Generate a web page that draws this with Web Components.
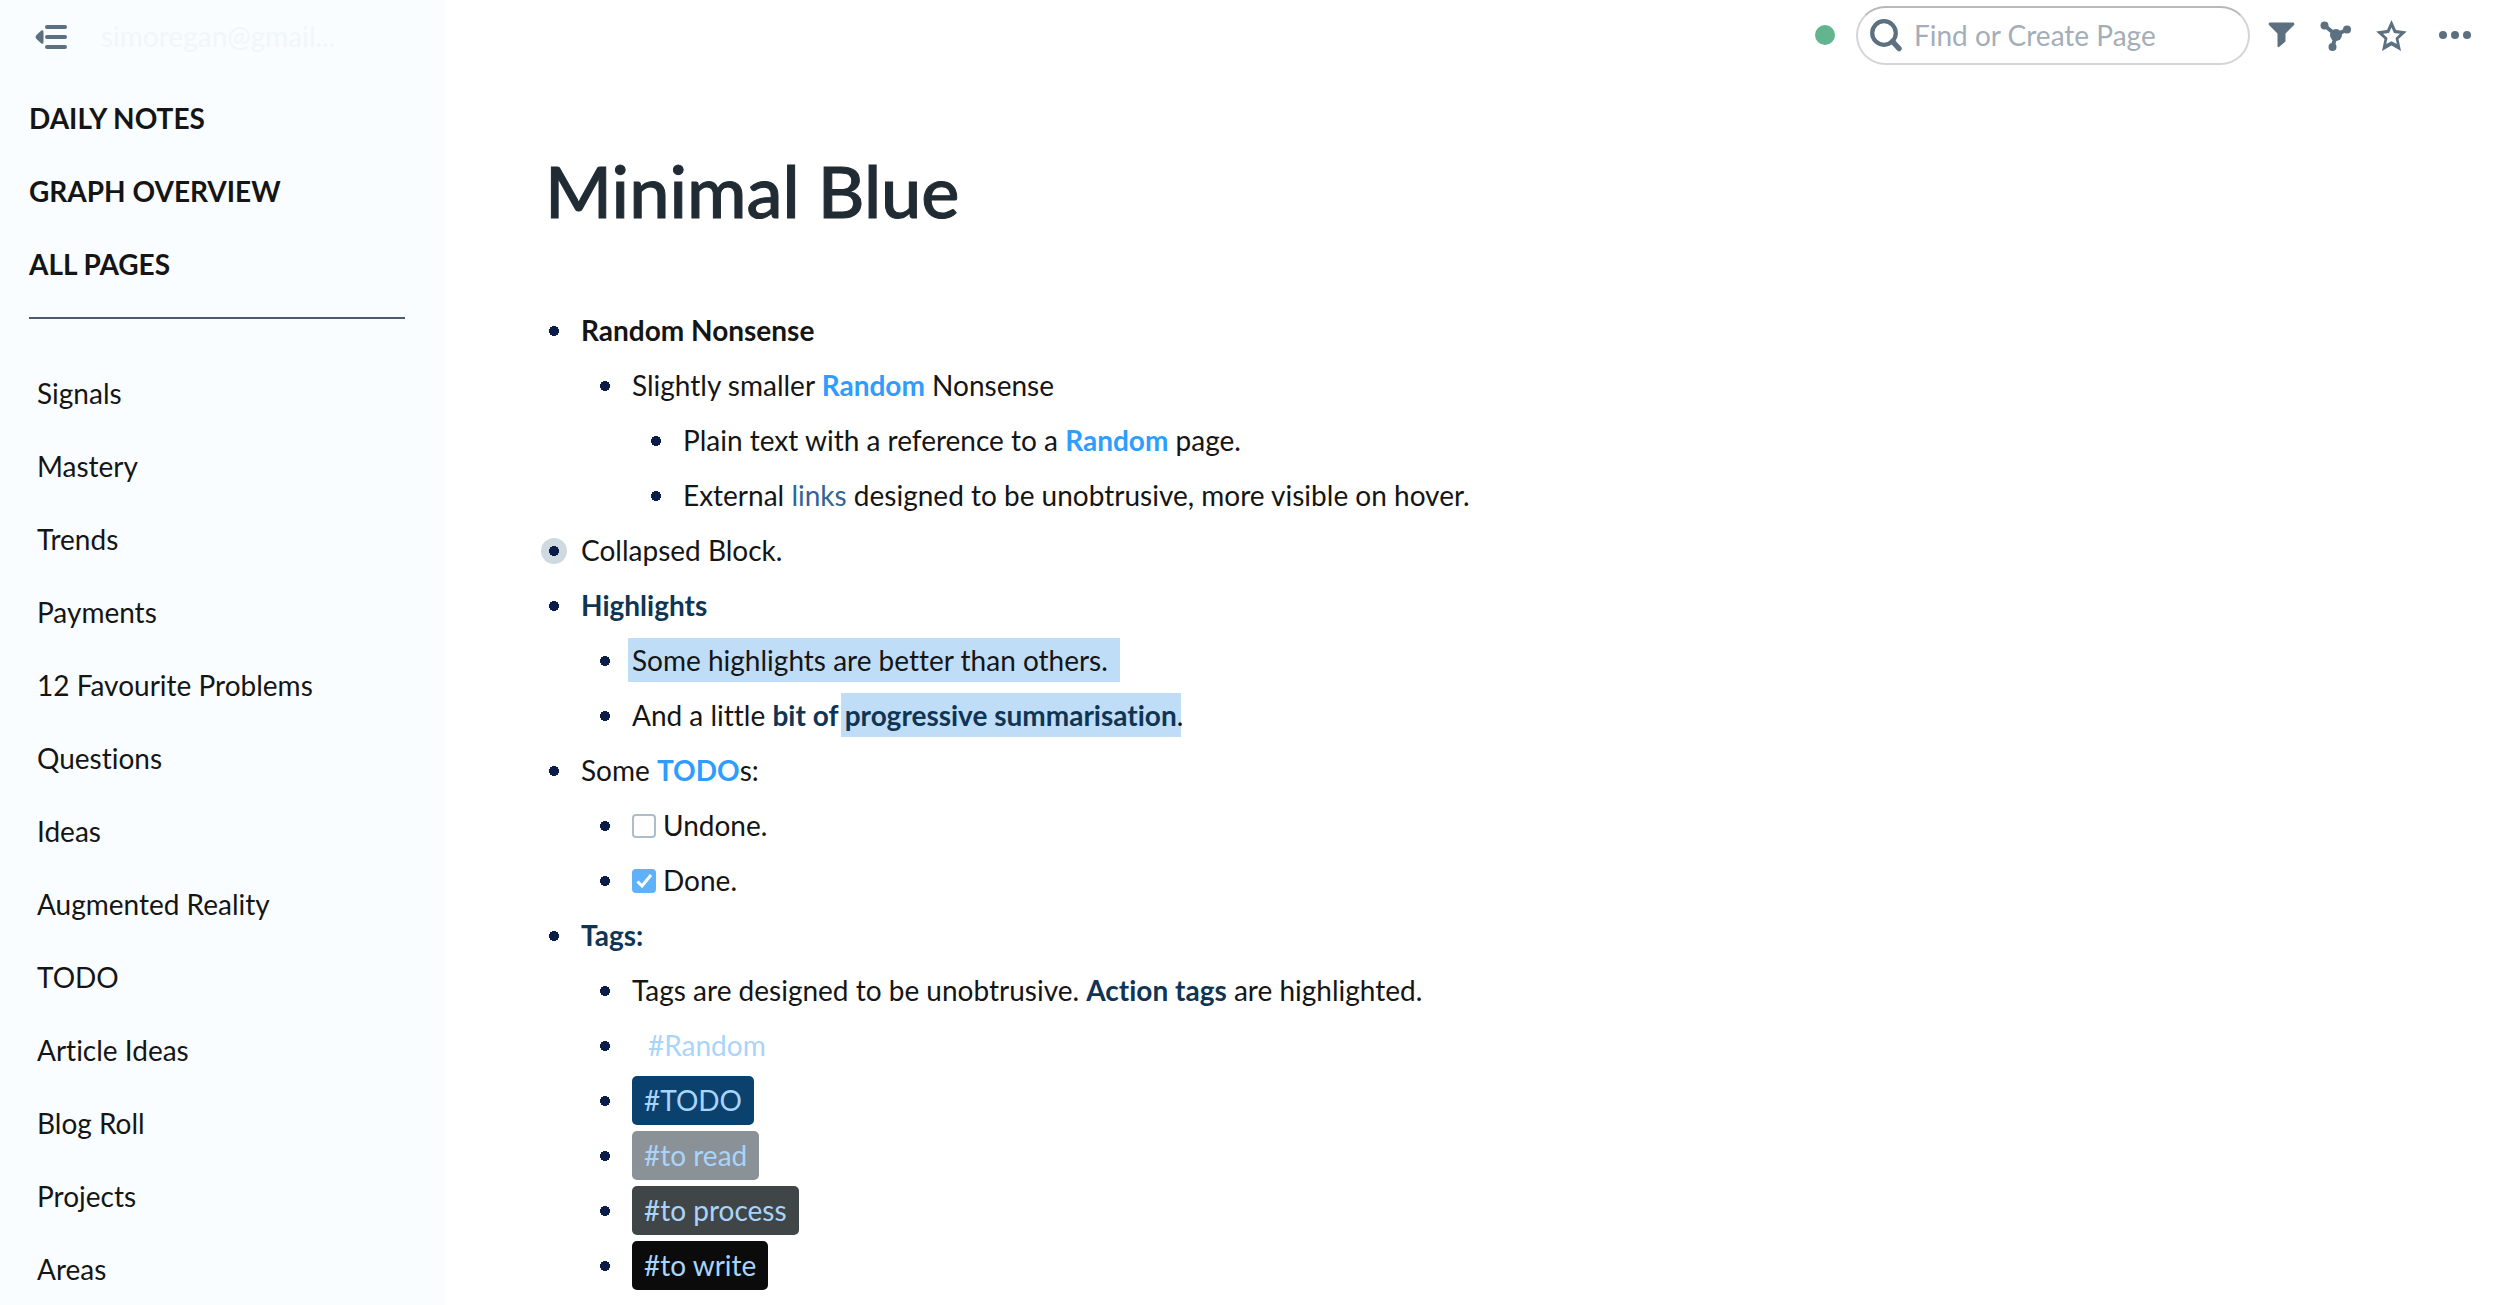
<!DOCTYPE html>
<html lang="en">
<head>
<meta charset="utf-8">
<title>Minimal Blue</title>
<style>
    html, body { margin: 0; height: 100%; }
    body {
        font-family: Lato, "Open Sans", sans-serif;
        font-size: 28px;
        font-variant-ligatures: none;
        line-height: 55px;
        color: #151515;
        background: #fff;
        overflow: hidden;
        --icon-color: #5c7080;
        --navy: #0f3554;
        --link: #2f9dff;
    }
    a { color: inherit; text-decoration: none; }
    b { color: var(--navy); }
    b.plain { color: inherit; }
    a.page { color: var(--link); font-weight: 700; }
    a.external { color: #326494; }
    mark { color: inherit; background: #c0ddf8; padding: 5px 4px; margin: 0 -4px; }
    mark.line { padding-right: 12px; }
</style>
</head>
<body>
<notes-app>
    <side-bar slot="sidebar" user="simoregan@gmail...">
        <nav-link slot="main">DAILY NOTES</nav-link>
        <nav-link slot="main">GRAPH OVERVIEW</nav-link>
        <nav-link slot="main">ALL PAGES</nav-link>
        <nav-link>Signals</nav-link>
        <nav-link>Mastery</nav-link>
        <nav-link>Trends</nav-link>
        <nav-link>Payments</nav-link>
        <nav-link>12 Favourite Problems</nav-link>
        <nav-link>Questions</nav-link>
        <nav-link>Ideas</nav-link>
        <nav-link>Augmented Reality</nav-link>
        <nav-link>TODO</nav-link>
        <nav-link>Article Ideas</nav-link>
        <nav-link>Blog Roll</nav-link>
        <nav-link>Projects</nav-link>
        <nav-link>Areas</nav-link>
    </side-bar>
    <top-bar slot="topbar"></top-bar>
    <note-page heading="Minimal Blue">
        <note-block><b class="plain">Random Nonsense</b>
            <note-block slot="children">Slightly smaller <a class="page" href="#random">Random</a> Nonsense
                <note-block slot="children">Plain text with a reference to a <a class="page" href="#random">Random</a> page.</note-block>
                <note-block slot="children">External <a class="external" href="#links">links</a> designed to be unobtrusive, more visible on hover.</note-block>
            </note-block>
        </note-block>
        <note-block collapsed>Collapsed Block.</note-block>
        <note-block><b>Highlights</b>
            <note-block slot="children"><mark class="line">Some highlights are better than others.</mark></note-block>
            <note-block slot="children">And a little <b>bit of <mark>progressive summarisation</mark></b>.</note-block>
        </note-block>
        <note-block>Some <a class="page" href="#todo">TODO</a>s:
            <note-block slot="children"><todo-item>Undone.</todo-item></note-block>
            <note-block slot="children"><todo-item done>Done.</todo-item></note-block>
        </note-block>
        <note-block><b>Tags:</b>
            <note-block slot="children">Tags are designed to be unobtrusive. <b>Action tags</b> are highlighted.</note-block>
            <note-block slot="children"><page-tag>#Random</page-tag></note-block>
            <note-block slot="children"><page-tag kind="todo">#TODO</page-tag></note-block>
            <note-block slot="children"><page-tag kind="read">#to read</page-tag></note-block>
            <note-block slot="children"><page-tag kind="process">#to process</page-tag></note-block>
            <note-block slot="children"><page-tag kind="write">#to write</page-tag></note-block>
        </note-block>
    </note-page>
</notes-app>

<script>
class NotesApp extends HTMLElement {
    constructor() {
        super();
        this.attachShadow({ mode: 'open' }).innerHTML = `
            <style>
                :host { display: grid; grid-template-columns: 445px 1fr; height: 100vh; overflow: hidden; }
                .content { display: flex; flex-direction: column; min-width: 0; }
            </style>
            <slot name="sidebar"></slot>
            <div class="content">
                <slot name="topbar"></slot>
                <slot></slot>
            </div>
        `;
    }
}

class SideBar extends HTMLElement {
    constructor() {
        super();
        this.attachShadow({ mode: 'open' });
    }

    connectedCallback() {
        this.shadowRoot.innerHTML = `
            <style>
                :host { display: block; background: #f9fdff; padding: 0 40px 0 29px; overflow: hidden; }
                header { display: flex; align-items: center; gap: 34px; height: 72px; padding-left: 6px; }
                button { display: flex; border: 0; padding: 0; background: none; color: var(--icon-color); cursor: pointer; }
                .user { color: #f1f6fa; }
                .main { display: block; padding: 10px 0 16px; font-weight: 700; }
                hr { margin: 0 0 38px; border: 0; border-top: 2px solid #4b5b6e; }
                .starred { display: block; padding-left: 8px; }
            </style>
            <header>
                <button aria-label="Close sidebar">
                    <svg width="32" height="26" viewBox="0 0 32 26" fill="currentColor">
                        <path d="M1.500 12 6.300 7.600Q8.500 6.500 8.500 9v10q0 2.500-2.200 1.400L1.500 16q-1.800-2 0-4z"/>
                        <path d="M12 4h18M12 14h18M12 24h18" stroke="currentColor" stroke-width="4" stroke-linecap="round"/>
                    </svg>
                </button>
                <span class="user">${this.getAttribute('user')}</span>
            </header>
            <nav>
                <div class="main"><slot name="main"></slot></div>
                <hr>
                <div class="starred"><slot></slot></div>
            </nav>
        `;
    }
}

class NavLink extends HTMLElement {
    constructor() {
        super();
        this.attachShadow({ mode: 'open' }).innerHTML = `
            <style>
                :host { display: block; line-height: 73px; white-space: nowrap; }
                a { color: inherit; text-decoration: none; }
            </style>
            <a href="#"><slot></slot></a>
        `;
    }
}

class TopBar extends HTMLElement {
    constructor() {
        super();
        this.attachShadow({ mode: 'open' }).innerHTML = `
            <style>
                :host { display: flex; justify-content: flex-end; align-items: center; height: 70px; padding-right: 29px; color: var(--icon-color); }
                .status { width: 20px; height: 20px; margin-right: 21px; border-radius: 50%; background: #62b58f; }
                label {
                    display: flex;
                    align-items: center;
                    gap: 10px;
                    box-sizing: border-box;
                    width: 394px;
                    height: 59px;
                    padding: 0 12px;
                    margin-right: 13px;
                    border: 2px solid #d5d5d5;
                    border-top-color: #b8b8b8;
                    border-radius: 30px;
                }
                input { flex: 1; min-width: 0; border: 0; padding: 0; outline: 0; background: none; font: inherit; color: inherit; }
                input::placeholder { color: #a3aeb9; opacity: 1; }
                button { display: flex; border: 0; padding: 0; background: none; color: inherit; cursor: pointer; }
                .tools { display: flex; align-items: center; gap: 24px; }
                .more { padding-left: 8px; }
                svg { display: block; }
            </style>
            <span class="status"></span>
            <label>
                <svg width="34" height="34" viewBox="0 0 34 34" fill="none" stroke="currentColor">
                    <circle cx="14" cy="15" r="11.800" stroke-width="4.200"/>
                    <path d="m22.500 23.500 6.500 7" stroke-width="5.500" stroke-linecap="round"/>
                </svg>
                <input type="text" placeholder="Find or Create Page" aria-label="Find or Create Page">
            </label>
            <div class="tools">
                <button aria-label="Filter">
                    <svg width="32" height="32" viewBox="0 0 32 32" fill="currentColor">
                        <path d="M6.500 3.500h24q1.500 1 .5 2.500L22.500 14.500v8L16 28q-1.500.5-1.500-1V14.500L6 6q-1-1.500.5-2.500z"/>
                    </svg>
                </button>
                <button aria-label="Graph">
                    <svg width="32" height="32" viewBox="0 0 32 32" fill="currentColor" stroke="currentColor">
                        <path d="M5.500 6.500 17 16l11-5.500M17 16l-3.500 12" fill="none" stroke-width="4"/>
                        <circle cx="17" cy="16" r="6" stroke="none"/>
                        <circle cx="5.500" cy="6.500" r="4" stroke="none"/>
                        <circle cx="28" cy="10.500" r="4" stroke="none"/>
                        <circle cx="13.500" cy="28" r="4" stroke="none"/>
                    </svg>
                </button>
                <button aria-label="Star">
                    <svg width="32" height="32" viewBox="0 0 32 32" fill="currentColor" fill-rule="evenodd">
                        <path d="M16.500 1 21 11l10.800 1.500L23.500 20 26 32l-9.500-5.500L7 32l2.500-12-8.300-7.500L12 11zM16.500 8.500 14 14l-6 .8 4.500 4.200L11.200 25l5.300-2.800L21.800 25 20.500 19l4.500-4.200-6-.8z"/>
                    </svg>
                </button>
                <button class="more" aria-label="More">
                    <svg width="32" height="32" viewBox="0 0 32 32" fill="currentColor">
                        <circle cx="4" cy="16" r="4"/><circle cx="16" cy="16" r="4"/><circle cx="28" cy="16" r="4"/>
                    </svg>
                </button>
            </div>
        `;
    }
}

class NotePage extends HTMLElement {
    constructor() {
        super();
        this.attachShadow({ mode: 'open' });
    }

    connectedCallback() {
        this.shadowRoot.innerHTML = `
            <style>
                :host { display: block; padding: 72px 96px 0; }
                h1 {
                    margin: 0 0 65px;
                    padding-left: 4px;
                    font-size: 72px;
                    font-weight: 500;
                    line-height: 96px;
                    color: #202b33;
                    -webkit-text-stroke: 1px #202b33;
                }
            </style>
            <h1>${this.getAttribute('heading')}</h1>
            <slot></slot>
        `;
    }
}

class NoteBlock extends HTMLElement {
    constructor() {
        super();
        this.attachShadow({ mode: 'open' }).innerHTML = `
            <style>
                :host { display: block; }
                .row { display: flex; align-items: center; gap: 14px; }
                .bullet {
                    flex: none;
                    width: 10px;
                    height: 10px;
                    border: 8px solid transparent;
                    border-radius: 50%;
                    background: radial-gradient(circle, #0b1c48 5px, transparent 5px) border-box;
                }
                :host([collapsed]) .bullet { background: radial-gradient(circle, #0b1c48 5px, #ced9e0 5px) border-box; }
                .text { min-width: 0; height: 55px; }
                .children { padding-left: 51px; }
            </style>
            <div class="row"><span class="bullet"></span><div class="text"><slot></slot></div></div>
            <div class="children"><slot name="children"></slot></div>
        `;
    }
}

class TodoItem extends HTMLElement {
    constructor() {
        super();
        this.attachShadow({ mode: 'open' });
    }

    connectedCallback() {
        this.shadowRoot.innerHTML = `
            <style>
                :host { display: block; }
                label { display: flex; align-items: center; gap: 7px; }
                input {
                    appearance: none;
                    box-sizing: border-box;
                    width: 24px;
                    height: 24px;
                    margin: 0;
                    border: 2px solid #aebccb;
                    border-radius: 4px;
                    background: #fff;
                }
                .box { display: grid; }
                .box > * { grid-area: 1 / 1; }
                svg { display: none; }
                input:checked { border-color: #5fb2f9; background: #5fb2f9; }
                input:checked + svg { display: block; pointer-events: none; z-index: 1; }
            </style>
            <label>
                <span class="box">
                    <input type="checkbox" ${this.hasAttribute('done') ? 'checked' : ''}>
                    <svg width="24" height="24" viewBox="0 0 24 24" fill="none" stroke="#fff" stroke-width="3">
                        <path d="m5.500 12.500 4.500 4.500 9-11"/>
                    </svg>
                </span>
                <slot></slot>
            </label>
        `;
    }
}

class PageTag extends HTMLElement {
    constructor() {
        super();
        this.attachShadow({ mode: 'open' }).innerHTML = `
            <style>
                :host { display: block; padding: 3px 0; line-height: 49px; }
                a { display: block; padding: 0 12px; border-radius: 5px; color: #a9d4fb; text-decoration: none; }
                :host(:not([kind])) a { padding: 0 16px; }
                :host([kind="todo"]) a { background: #0b416d; }
                :host([kind="read"]) a { background: #8a9197; }
                :host([kind="process"]) a { background: #404548; }
                :host([kind="write"]) a { background: #0b0b0b; }
            </style>
            <a href="#"><slot></slot></a>
        `;
    }
}

customElements.define('notes-app', NotesApp);
customElements.define('side-bar', SideBar);
customElements.define('nav-link', NavLink);
customElements.define('top-bar', TopBar);
customElements.define('note-page', NotePage);
customElements.define('note-block', NoteBlock);
customElements.define('todo-item', TodoItem);
customElements.define('page-tag', PageTag);
</script>
</body>
</html>
